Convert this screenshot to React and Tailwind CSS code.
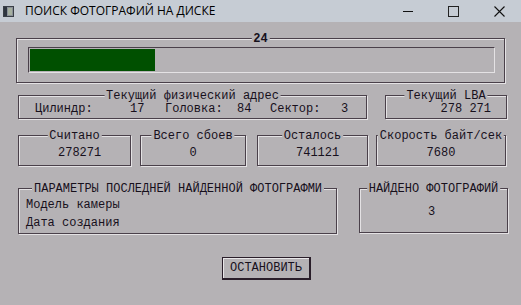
import React from 'react';

const mono = { fontFamily: '"Liberation Mono", "Courier New", monospace' };

function Group({ label, className = '', left = false, bold = false, children }) {
  return (
    <div
      className={`relative shrink-0 border border-[#4a404a] shadow-[1px_1px_0_#e4e2e4,inset_1px_1px_0_#e4e2e4] ${className}`}
    >
      <span
        className={`absolute top-[-6px] bg-[#b5b2b5] px-[2px] text-[12px] leading-[12px] whitespace-nowrap text-[#17101c] ${
          left ? 'left-[13px]' : 'left-1/2 -translate-x-1/2'
        } ${bold ? 'font-bold' : ''}`}
      >
        {label}
      </span>
      {children}
    </div>
  );
}

function WindowIcon() {
  return (
    <svg width="11" height="11" viewBox="0 0 11 11">
      <rect x="0.5" y="0.5" width="10" height="10" fill="#8a9098" stroke="#3a3f46" />
      <rect x="1" y="1" width="3" height="9" fill="#2f3640" />
      <rect x="5" y="2" width="4" height="7" fill="#a6b0a0" />
    </svg>
  );
}

export default function App() {
  return (
    <div className="w-[521px] h-[305px] overflow-hidden bg-[#b5b2b5]">
      {/* заголовок окна */}
      <div className="flex h-[22px] items-center bg-[#c6ccd4]">
        <div className="ml-[3px] flex items-center">
          <WindowIcon />
        </div>
        <span
          className="ml-[11px] text-[12px] text-black whitespace-nowrap"
          style={{ fontFamily: '"Open Sans", "Noto Sans", sans-serif' }}
        >
          ПОИСК ФОТОГРАФИЙ НА ДИСКЕ
        </span>
        <div className="ml-auto flex items-center">
          <svg width="11" height="11" viewBox="0 0 11 11" className="mr-[34px]">
            <path d="M0 5.5 H10" stroke="#111" strokeWidth="1" />
          </svg>
          <svg width="11" height="11" viewBox="0 0 11 11" className="mr-[35px]">
            <rect x="0.5" y="0.5" width="10" height="10" fill="none" stroke="#222" />
          </svg>
          <svg width="11" height="11" viewBox="0 0 11 11" className="mr-[16px]">
            <path d="M0.5 0.5 L10.5 10.5 M10.5 0.5 L0.5 10.5" stroke="#111" strokeWidth="1.1" />
          </svg>
        </div>
      </div>

      <div className="flex flex-col" style={mono}>
        {/* прогресс */}
        <Group label="24" bold className="ml-[16px] mt-[16px] w-[489px] h-[45px]">
          <div className="ml-[11px] mt-[8px] w-[467px] h-[26px] border-l border-t border-[#4a404a] border-r-[#e4e2e4] border-b-[#e4e2e4] border-r border-b p-[1px]">
            <div className="h-full w-[125px] bg-[#005000]" />
          </div>
        </Group>

        {/* адрес */}
        <div className="mt-[12px] flex">
          <Group label="Текущий физический адрес" className="ml-[18px] w-[349px] h-[24px]">
            <div className="flex pt-[7px] text-[12px] leading-[12px] text-[#17101c] whitespace-pre">
              <span className="ml-[16px] w-[95px]">Цилиндр:</span>
              <span className="w-[35px]">17</span>
              <span className="w-[72px]">Головка:</span>
              <span className="w-[33px]">84</span>
              <span className="w-[71px]">Сектор:</span>
              <span>3</span>
            </div>
          </Group>
          <Group label="Текущий LBA" className="ml-[18px] w-[122px] h-[24px]">
            <div className="pt-[7px] pr-[15px] text-right text-[12px] leading-[12px] text-[#17101c]">
              278 271
            </div>
          </Group>
        </div>

        {/* счётчики */}
        <div className="mt-[16px] flex text-[12px] leading-[12px] text-[#17101c]">
          <Group label="Считано" className="ml-[18px] w-[113px] h-[31px]">
            <div className="pt-[11px] pl-[39px]">278271</div>
          </Group>
          <Group label="Всего сбоев" className="ml-[9px] w-[106px] h-[31px]">
            <div className="pt-[11px] text-center">0</div>
          </Group>
          <Group label="Осталось" className="ml-[11px] w-[111px] h-[31px]">
            <div className="pt-[11px] pl-[38px]">741121</div>
          </Group>
          <Group label="Скорость байт/сек" className="ml-[8px] w-[130px] h-[31px]">
            <div className="pt-[11px] text-center">7680</div>
          </Group>
        </div>

        {/* параметры */}
        <div className="mt-[22px] flex items-start text-[12px] leading-[12px] text-[#17101c]">
          <Group
            label="ПАРАМЕТРЫ ПОСЛЕДНЕЙ НАЙДЕННОЙ ФОТОГРАФМИ"
            left
            className="ml-[18px] w-[319px] h-[46px]"
          >
            <div className="flex flex-col gap-[6px] pt-[10px] pl-[7px]">
              <span>Модель камеры</span>
              <span>Дата создания</span>
            </div>
          </Group>
          <Group label="НАЙДЕНО ФОТОГРАФИЙ" className="ml-[22px] w-[149px] h-[45px]">
            <div className="pt-[17px] pr-[4px] text-center">3</div>
          </Group>
        </div>

        {/* кнопка */}
        <div className="mt-[23px] flex">
          <button className="ml-[222px] flex w-[89px] h-[23px] items-center justify-center border border-[#2a1e2a] border-r-2 border-b-2 bg-[#b5b2b5] shadow-[inset_1px_1px_0_#e8e6e8] text-[12px] leading-[12px] text-[#17101c]">
            ОСТАНОВИТЬ
          </button>
        </div>
      </div>
    </div>
  );
}
